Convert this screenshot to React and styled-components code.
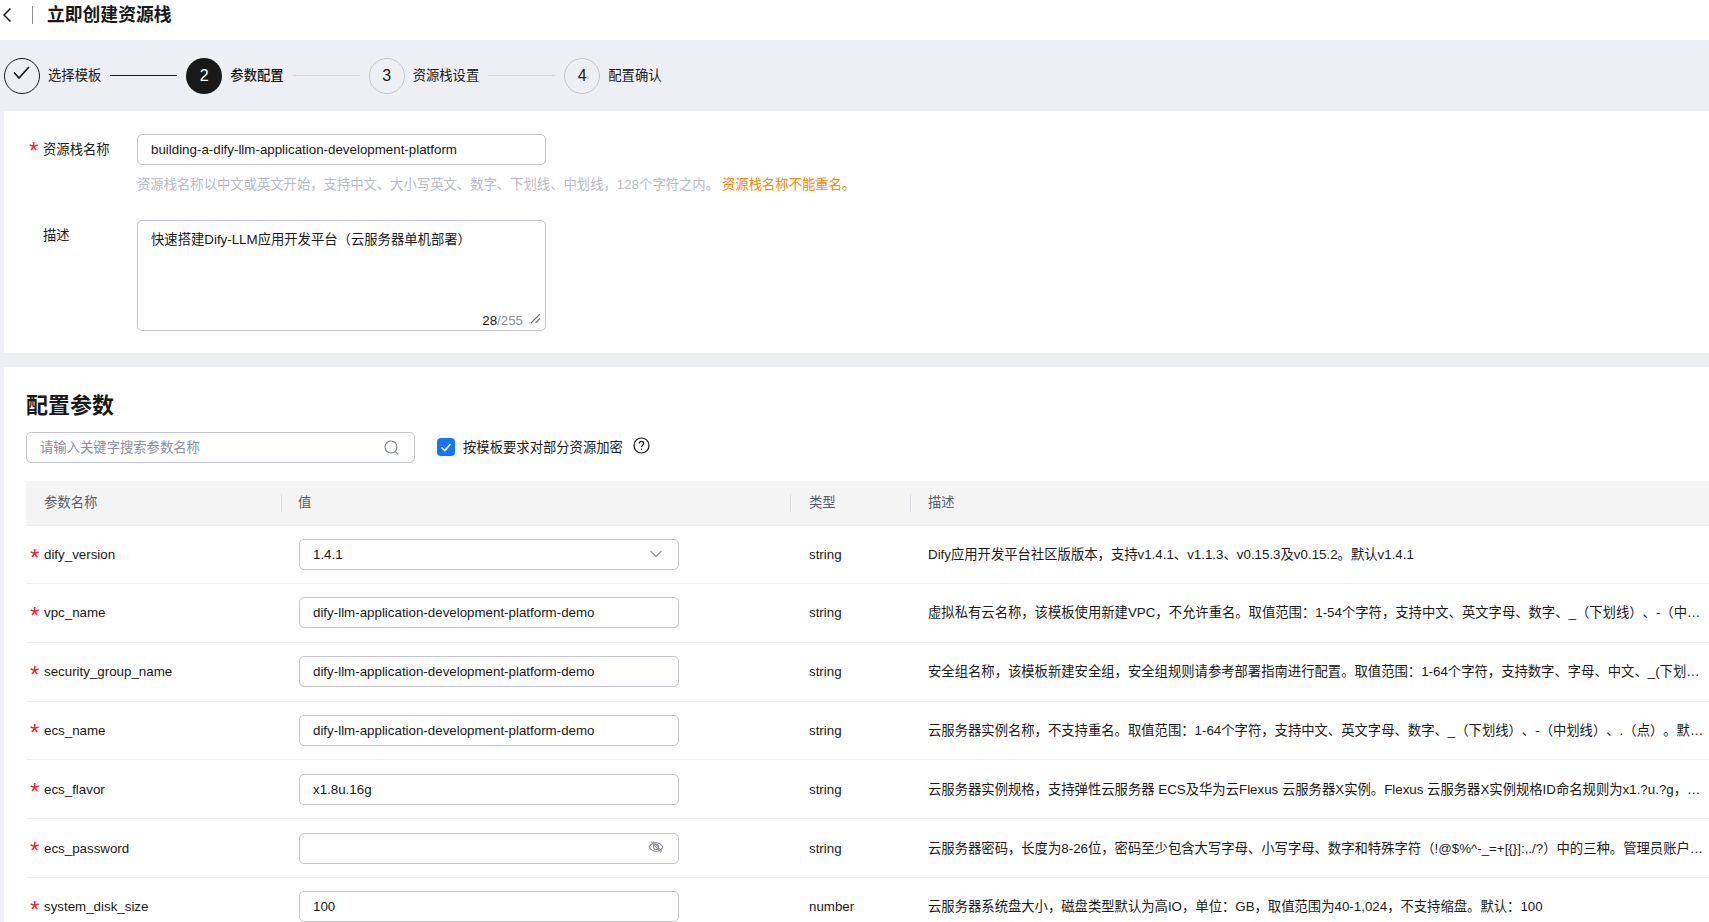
import React from 'react';
import styled, { createGlobalStyle } from 'styled-components';

const GlobalStyle = createGlobalStyle`
  html, body {
    margin: 0;
    height: 100%;
    overflow: hidden;
    background: #fff;
  }
  body {
    font-family: "Liberation Sans", "Noto Sans CJK SC", sans-serif;
    font-size: 13.33px;
    color: #191919;
    text-spacing-trim: space-all;
  }
  * {
    box-sizing: border-box;
  }
`;

const Page = styled.div`
  width: 1709px;
  height: 922px;
  overflow: hidden;
  background: #eeeff4;
`;

const Header = styled.header`
  display: flex;
  align-items: center;
  height: 40px;
  padding: 0 0 10px 2px;
  background: #fff;
`;

const BackIcon = styled.svg`
  width: 10px;
  height: 16px;
  fill: none;
  stroke: #191919;
  stroke-width: 1.5;
`;

const HeaderDivider = styled.span`
  width: 1px;
  height: 18px;
  margin: 0 14px 0 20px;
  background: #8a8e99;
`;

const Title = styled.h1`
  margin: 0;
  font-size: 17.8px;
  line-height: 30px;
  font-weight: 700;
  color: #191919;
`;

const Steps = styled.div`
  display: flex;
  align-items: center;
  height: 71px;
  padding-left: 4px;
`;

const StepCircle = styled.span`
  display: flex;
  align-items: center;
  justify-content: center;
  width: 36px;
  height: 36px;
  border-radius: 50%;
  font-size: 16px;
  flex: none;
  ${({ $state }) =>
    $state === 'done'
      ? 'border: 1px solid #191919; color: #191919;'
      : $state === 'active'
        ? 'background: #191919; color: #fff;'
        : 'border: 1px solid #c4c6cc; color: #191919;'}
`;

const StepLabel = styled.span`
  margin: 0 1px 3px 8px;
  font-size: 13.33px;
  white-space: nowrap;
  color: #191919;
  font-weight: ${({ $active }) => ($active ? 500 : 400)};
`;

const StepLine = styled.span`
  width: 67px;
  height: 1px;
  margin: 0 9px 0 8px;
  background: ${({ $done }) => ($done ? '#191919' : '#d4d6db')};
`;

const Panel = styled.section`
  margin-left: 4px;
  background: #fff;
`;

const BasicPanel = styled(Panel)`
  height: 242px;
  padding: 23px 0 0 0;
`;

const FormRow = styled.div`
  display: flex;
  align-items: flex-start;
`;

const FormLabel = styled.div`
  display: flex;
  align-items: center;
  width: 133px;
  height: 31px;
  padding: 0 0 3px 25px;
  font-size: 13.33px;
  color: #191919;
`;

const Star = styled.span`
  color: #f5222d;
  font-size: 24px;
  line-height: 14px;
  height: 14px;
  width: 14px;
  flex: none;
  margin-top: 6px;
`;

const Field = styled.div`
  display: flex;
  align-items: center;
  justify-content: space-between;
  width: ${({ $width }) => $width}px;
  height: 31px;
  padding: 0 13px;
  border: 1px solid #c4c6cc;
  border-radius: 5px;
  background: #fff;
  font-size: 13.33px;
  color: #191919;
  white-space: nowrap;
`;

const Hint = styled.div`
  height: 55px;
  padding: 12px 0 0 133px;
  font-size: 13.33px;
  line-height: 16px;
  color: #b8bac2;
`;

const Warn = styled.span`
  margin-left: 3px;
  color: #ff8a00;
`;

const TextArea = styled.div`
  position: relative;
  width: 409px;
  height: 111px;
  padding: 10px 13px;
  border: 1px solid #c4c6cc;
  border-radius: 5px;
  font-size: 13.33px;
  line-height: 18px;
  color: #191919;
`;

const Counter = styled.div`
  position: absolute;
  right: 22px;
  bottom: 0;
  font-size: 13.33px;
  line-height: 18px;
  color: #8a8e99;
`;

const CounterValue = styled.span`
  color: #191919;
`;

const ResizeGrip = styled.svg`
  position: absolute;
  right: 4px;
  bottom: 6px;
  width: 11px;
  height: 11px;
  fill: none;
  stroke: #6f7480;
  stroke-width: 1.1;
`;

const ParamPanel = styled(Panel)`
  margin-top: 14px;
  padding: 24px 0 0 22px;
`;

const SectionTitle = styled.h2`
  margin: 0;
  font-size: 22px;
  line-height: 30px;
  font-weight: 700;
  color: #191919;
`;

const Toolbar = styled.div`
  display: flex;
  align-items: center;
  margin-top: 11px;
`;

const SearchBox = styled(Field)`
  color: #8a8e99;
`;

const Placeholder = styled.span`
  margin-bottom: 3px;
`;

const SearchIcon = styled.svg`
  width: 17px;
  height: 17px;
  margin-right: 1px;
  fill: none;
  stroke: #8a8e99;
  stroke-width: 1.2;
`;

const Checkbox = styled.span`
  display: flex;
  align-items: center;
  justify-content: center;
  width: 18px;
  height: 18px;
  margin: -1px 0 0 22px;
  border-radius: 4px;
  background: #1476ff;
`;

const CheckLabel = styled.span`
  margin: 0 0 3px 8px;
  font-size: 13.33px;
  color: #191919;
`;

const HelpIcon = styled.svg`
  width: 17px;
  height: 17px;
  margin: -4px 0 0 10px;
  fill: none;
  stroke: #191919;
  stroke-width: 1.2;
`;

const TableHead = styled.div`
  display: grid;
  grid-template-columns: 255px 509px 120px minmax(0, 1fr);
  align-items: center;
  height: 45px;
  margin-top: 18px;
  background: #f4f4f5;
  border-bottom: 1px solid #eeeff2;
`;

const HeadCell = styled.div`
  height: 18px;
  padding-left: ${({ $pad }) => $pad}px;
  border-left: ${({ $first }) => ($first ? 'none' : '1px solid #dfe1e6')};
  font-size: 13.33px;
  line-height: 17px;
  color: #575d6c;
`;

const Row = styled.div`
  display: grid;
  grid-template-columns: 255px 509px 120px minmax(0, 1fr);
  align-items: center;
  height: ${({ $first }) => ($first ? 58 : 58.8)}px;
  border-bottom: 1px solid #eeeff2;
`;

const NameCell = styled.div`
  display: flex;
  align-items: center;
  padding-left: 4px;
  font-size: 13.33px;
  color: #191919;
`;

const ValueCell = styled.div`
  padding-left: 18px;
`;

const TypeCell = styled.div`
  padding-left: 19px;
  font-size: 13.33px;
  color: #191919;
`;

const DescCell = styled.div`
  padding: 0 1px 2px 18px;
  font-size: 13.33px;
  color: #191919;
  white-space: nowrap;
  overflow: hidden;
  text-overflow: ellipsis;
`;

const FieldIcon = styled.svg`
  width: 16px;
  height: 16px;
  margin: -2px 1px 0 auto;
  fill: none;
  stroke: #8a8e99;
  stroke-width: 1.1;
`;

const params = [
  {
    name: 'dify_version',
    value: '1.4.1',
    kind: 'select',
    type: 'string',
    desc: 'Dify应用开发平台社区版版本，支持v1.4.1、v1.1.3、v0.15.3及v0.15.2。默认v1.4.1',
  },
  {
    name: 'vpc_name',
    value: 'dify-llm-application-development-platform-demo',
    type: 'string',
    desc: '虚拟私有云名称，该模板使用新建VPC，不允许重名。取值范围：1-54个字符，支持中文、英文字母、数字、_（下划线）、-（中划线）、.（点）。默认：dify-llm-application-development-platform-demo',
  },
  {
    name: 'security_group_name',
    value: 'dify-llm-application-development-platform-demo',
    type: 'string',
    desc: '安全组名称，该模板新建安全组，安全组规则请参考部署指南进行配置。取值范围：1-64个字符，支持数字、字母、中文、_(下划线)、-（中划线）、.（点）。默认：dify-llm-application-development-platform-demo',
  },
  {
    name: 'ecs_name',
    value: 'dify-llm-application-development-platform-demo',
    type: 'string',
    desc: '云服务器实例名称，不支持重名。取值范围：1-64个字符，支持中文、英文字母、数字、_（下划线）、-（中划线）、.（点）。默认：dify-llm-application-development-platform-demo',
  },
  {
    name: 'ecs_flavor',
    value: 'x1.8u.16g',
    type: 'string',
    desc: '云服务器实例规格，支持弹性云服务器 ECS及华为云Flexus 云服务器X实例。Flexus 云服务器X实例规格ID命名规则为x1.?u.?g，例如2vCPUs4GiB规格ID为x1.2u.4g。默认：x1.8u.16g',
  },
  {
    name: 'ecs_password',
    value: '',
    kind: 'password',
    type: 'string',
    desc: '云服务器密码，长度为8-26位，密码至少包含大写字母、小写字母、数字和特殊字符（!@$%^-_=+[{}]:,./?）中的三种。管理员账户默认为root，请妥善保管密码。',
  },
  {
    name: 'system_disk_size',
    value: '100',
    type: 'number',
    desc: '云服务器系统盘大小，磁盘类型默认为高IO，单位：GB，取值范围为40-1,024，不支持缩盘。默认：100',
  },
];

const steps = [
  { label: '选择模板', state: 'done' },
  { label: '参数配置', state: 'active' },
  { label: '资源栈设置', state: 'todo' },
  { label: '配置确认', state: 'todo' },
];

const App = () => (
  <Page>
    <GlobalStyle />
    <Header>
      <BackIcon viewBox="0 0 10 16">
        <path d="M8.500 1.500 2 8l6.500 6.500" />
      </BackIcon>
      <HeaderDivider />
      <Title>立即创建资源栈</Title>
    </Header>

    <Steps>
      {steps.map((step, i) => (
        <React.Fragment key={step.label}>
          <StepCircle $state={step.state}>
            {step.state === 'done' ? (
              <svg width="20" height="20" viewBox="0 0 20 20" fill="none" stroke="#191919" strokeWidth="1.7">
                <path d="M2 6.500 7 12 17 1" />
              </svg>
            ) : (
              i + 1
            )}
          </StepCircle>
          <StepLabel $active={step.state === 'active'}>{step.label}</StepLabel>
          {i < steps.length - 1 && <StepLine $done={step.state === 'done'} />}
        </React.Fragment>
      ))}
    </Steps>

    <BasicPanel>
      <FormRow>
        <FormLabel>
          <Star>*</Star>
          资源栈名称
        </FormLabel>
        <Field $width={409}>building-a-dify-llm-application-development-platform</Field>
      </FormRow>
      <Hint>
        资源栈名称以中文或英文开始，支持中文、大小写英文、数字、下划线、中划线，128个字符之内。
        <Warn>资源栈名称不能重名。</Warn>
      </Hint>
      <FormRow>
        <FormLabel>
          <Star />
          描述
        </FormLabel>
        <TextArea>
          快速搭建Dify-LLM应用开发平台（云服务器单机部署）
          <Counter>
            <CounterValue>28</CounterValue>/255
          </Counter>
          <ResizeGrip viewBox="0 0 11 11">
            <path d="M1 10 10 1M5.500 10 10 5.500" />
          </ResizeGrip>
        </TextArea>
      </FormRow>
    </BasicPanel>

    <ParamPanel>
      <SectionTitle>配置参数</SectionTitle>
      <Toolbar>
        <SearchBox $width={389}>
          <Placeholder>请输入关键字搜索参数名称</Placeholder>
          <SearchIcon viewBox="0 0 17 17">
            <circle cx="8" cy="8" r="6" />
            <path d="m12.300 12.300 3 3.200" />
          </SearchIcon>
        </SearchBox>
        <Checkbox>
          <svg width="12" height="12" viewBox="0 0 12 12" fill="none" stroke="#fff" strokeWidth="1.6">
            <path d="M1.500 6.500 4.800 9.500 10.500 3" />
          </svg>
        </Checkbox>
        <CheckLabel>按模板要求对部分资源加密</CheckLabel>
        <HelpIcon viewBox="0 0 17 17">
          <circle cx="8.500" cy="8.500" r="7.500" />
          <path d="M6.300 6.600c0-1.300 1-2.200 2.200-2.200s2.200.9 2.200 2.100c0 1.700-2.200 1.700-2.200 3.600" />
          <path d="M8.500 11.500v1.400" />
        </HelpIcon>
      </Toolbar>

      <TableHead>
        <HeadCell $first $pad={18}>参数名称</HeadCell>
        <HeadCell $pad={16}>值</HeadCell>
        <HeadCell $pad={18}>类型</HeadCell>
        <HeadCell $pad={17}>描述</HeadCell>
      </TableHead>

      {params.map((param, i) => (
        <Row key={param.name} $first={i === 0}>
          <NameCell>
            <Star>*</Star>
            {param.name}
          </NameCell>
          <ValueCell>
            <Field $width={380}>
              {param.value}
              {param.kind === 'select' && (
                <FieldIcon viewBox="0 0 16 16">
                  <path d="m2.500 5 5.500 5.500L13.500 5" />
                </FieldIcon>
              )}
              {param.kind === 'password' && (
                <FieldIcon viewBox="0 0 16 16">
                  <path d="M1 8c1.800-2.800 4.200-4.200 7-4.200s5.200 1.400 7 4.200c-1.800 2.800-4.200 4.200-7 4.200S2.800 10.800 1 8Z" />
                  <circle cx="8" cy="8" r="2.600" />
                  <path d="m3 2.500 10 11M5 2.500l9 10" />
                </FieldIcon>
              )}
            </Field>
          </ValueCell>
          <TypeCell>{param.type}</TypeCell>
          <DescCell>{param.desc}</DescCell>
        </Row>
      ))}
    </ParamPanel>
  </Page>
);

export default App;
